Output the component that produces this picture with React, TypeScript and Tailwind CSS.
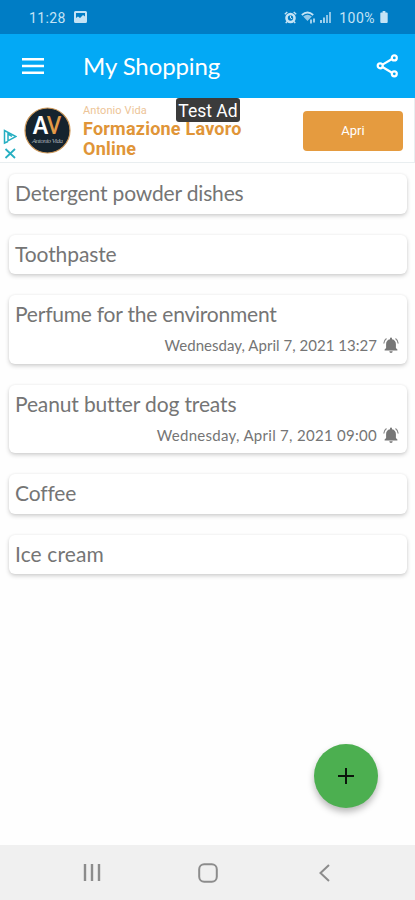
import React from 'react';

type Item = {
  title: string;
  titleClass: string;
  reminder?: string;
  reminderClass?: string;
};

const items: Item[] = [
  { title: 'Detergent powder dishes', titleClass: 'tracking-[-0.16px]' },
  { title: 'Toothpaste', titleClass: 'tracking-[-0.1px]' },
  { title: 'Perfume for the environment', titleClass: 'tracking-[-0.22px]', reminder: 'Wednesday, April 7, 2021 13:27', reminderClass: 'tracking-[0.03px]' },
  { title: 'Peanut butter dog treats', titleClass: 'tracking-[-0.14px]', reminder: 'Wednesday, April 7, 2021 09:00', reminderClass: 'tracking-[0.29px]' },
  { title: 'Coffee', titleClass: 'tracking-[-0.15px]' },
  { title: 'Ice cream', titleClass: 'tracking-[0.1px]' },
];

const StatusBar: React.FC = () => (
  <div className="h-[34px] bg-[#007dc5] flex items-center pl-[29px] pr-[27px] text-[#c4e3f5] font-[Roboto,sans-serif] text-[14px] shrink-0">
    <span className="tracking-[0.4px] pt-[2px]">11:28</span>
    <svg className="ml-[8px]" width="13" height="12" viewBox="0 0 13 12">
      <path fillRule="evenodd" fill="currentColor" d="M1.5 0h10A1.5 1.5 0 0 1 13 1.5v9a1.5 1.5 0 0 1-1.5 1.5h-10A1.5 1.5 0 0 1 0 10.5v-9A1.5 1.5 0 0 1 1.5 0zM2 2v5l2-1.5L6 7l3-3 2 1.5V2z" />
    </svg>
    <div className="ml-auto flex items-center">
      {/* Alarm */}
      <svg width="13" height="13" viewBox="0 0 13 13" fill="none" stroke="currentColor">
        <circle cx="6.5" cy="7" r="4" strokeWidth="2.6" />
        <path d="M.8 3.2L3.3.9M12.2 3.2L9.7.9M3 10.5l-1.2 1.7M10 10.5l1.2 1.7" strokeWidth="1.4" />
        <path d="M6.5 4.8V7l1.7.8" strokeWidth="1" />
      </svg>
      {/* Wifi */}
      <svg className="ml-[4px]" width="16" height="13" viewBox="0 0 16 13" fill="none" stroke="currentColor">
        <path d="M.8 4Q6.5 -1 12.2 4" strokeWidth="1.8" />
        <path d="M2.2 5.4Q6.5 2.2 10.8 5.4L6.5 10z" fill="currentColor" stroke="none" opacity=".75" />
        <path d="M10 8.500v4M13 7.5v4" strokeWidth="1.6" />
      </svg>
      {/* Signal */}
      <svg className="ml-[3px]" width="12" height="12" viewBox="0 0 12 12" fill="currentColor">
        <rect x="0" y="9" width="2" height="3" opacity=".8" />
        <rect x="3" y="6.5" width="2" height="5.5" opacity=".8" />
        <rect x="6" y="4" width="2" height="8" opacity=".7" />
        <rect x="9" y="1" width="2" height="11" opacity=".7" />
      </svg>
      <span className="ml-[7px] pt-[2px] tracking-[0.5px]">100%</span>
      <svg className="ml-[5px]" width="8" height="12" viewBox="0 0 8 13" fill="currentColor">
        <path d="M2.5 0h3v1.5H7a1 1 0 0 1 1 1V12a1 1 0 0 1-1 1H1a1 1 0 0 1-1-1V2.5a1 1 0 0 1 1-1h1.5z" />
      </svg>
    </div>
  </div>
);

const Header: React.FC = () => (
  <header className="h-[64px] bg-[#03a9f5] flex items-center pl-[22px] pr-[16px] text-white shrink-0">
    <svg width="22" height="16" viewBox="0 0 22 16" fill="none" stroke="currentColor" strokeWidth="2.4">
      <path d="M0 1.3h22M0 8h22M0 14.7h22" />
    </svg>
    <h1 className="ml-[39px] font-[Lato,sans-serif] text-[24px] tracking-[-0.1px] leading-8">My Shopping</h1>
    <svg className="ml-auto" width="23" height="24" viewBox="0 0 23 24" fill="none" stroke="currentColor" strokeWidth="2.2">
      <path d="M6.5 10.6L16 5M6.5 13L16 18.7" />
      <circle cx="4.2" cy="11.8" r="2.5" />
      <circle cx="18.3" cy="3.9" r="2.5" />
      <circle cx="18.3" cy="19.8" r="2.5" />
    </svg>
  </header>
);

const AdBanner: React.FC = () => (
  <div className="h-[65px] relative flex bg-white border-b border-r border-[#e9eef0] pt-[7px] pl-[3px] pr-[11px] font-[Roboto,sans-serif] shrink-0">
    <svg className="mt-[24px] shrink-0" width="14" height="32" viewBox="0 0 14 32" fill="none" stroke="#27afc2" strokeWidth="1.5">
      <path d="M5 12.500L1.5 14V1.5L13 7.5L5 11.8V5L9 7.3" />
      <path d="M2.5 20l9.5 9M12 20l-9.5 9" strokeWidth="1.8" />
    </svg>
    {/* Advertiser logo */}
    <svg className="ml-[7px] mt-[2px] shrink-0" width="47" height="47" viewBox="0 0 47 47">
      <circle cx="23.5" cy="23.5" r="22.5" fill="#15232e" stroke="#ce9858" strokeWidth="1.2" />
      <text x="9" y="26.5" fontFamily="Lato, sans-serif" fontSize="24" fontWeight="900" fill="#fff" textLength="15" lengthAdjust="spacingAndGlyphs">A</text>
      <text x="23" y="26.5" fontFamily="Lato, sans-serif" fontSize="24" fontWeight="700" fill="#e39a47" textLength="14" lengthAdjust="spacingAndGlyphs">V</text>
      <text x="8" y="35.5" fontFamily="Liberation Serif, serif" fontStyle="italic" fontSize="7" fill="#a3adb3" textLength="31">Antonio Vida</text>
    </svg>
    <div className="ml-[12px] text-[#e09538] whitespace-nowrap">
      <div className="text-[11px] leading-[12px] text-[#edc497] tracking-[0.1px]">Antonio Vida</div>
      <div className="text-[18px] font-bold leading-[20px] mt-[2px] tracking-[0.22px]">Formazione Lavoro<br />Online</div>
    </div>
    <button className="ml-auto mt-[6px] w-[100px] h-[40px] rounded-[4px] bg-[#e59b3f] text-white text-[13px] shrink-0">Apri</button>
    <div className="absolute left-[176px] top-0 w-[64px] h-[24px] bg-[#3b3b3b] rounded-[3px] text-white text-[17.5px] leading-[26px] text-center whitespace-nowrap">Test Ad</div>
  </div>
);

const BellIcon: React.FC = () => (
  <svg className="ml-[6px]" width="16" height="17" viewBox="0 0 16 17" fill="#777">
    <path d="M7 1.5a1 1 0 0 1 2 0v.7c2.6.5 3.9 2.3 3.9 4.8v4l1.5 1.5v1H1.6v-1L3.1 11V7c0-2.5 1.3-4.3 3.9-4.8zM6.3 14.3h3.4a1.7 1.7 0 0 1-3.4 0z" />
    <path d="M3.5 1.5A6.5 6.5 0 0 0 .8 6.5M12.5 1.5a6.5 6.5 0 0 1 2.7 5" fill="none" stroke="#888" strokeWidth="1.2" />
  </svg>
);

const ItemCard: React.FC<{ item: Item }> = ({ item }) => (
  <div className={`bg-white rounded-[6px] pl-[6px] pr-[8px] shadow-[0_2px_4px_rgba(0,0,0,0.18),0_0_3px_rgba(0,0,0,0.05)] font-[Lato,sans-serif] text-[#757575] ${item.reminder ? 'h-[68.5px]' : 'h-[39.5px]'}`}>
    <div className={`text-[21px] leading-[37px] h-[39px] whitespace-nowrap ${item.titleClass}`}>{item.title}</div>
    {item.reminder && (
      <div className="flex items-center justify-end h-[23px] text-[15px]">
        <span className={item.reminderClass}>{item.reminder}</span>
        <BellIcon />
      </div>
    )}
  </div>
);

const App: React.FC = () => {
  return (
    <div className="w-[415px] h-[900px] flex flex-col bg-[#fefefe] relative overflow-hidden">
      <StatusBar />
      <Header />
      <AdBanner />

      <main className="flex-1 flex flex-col gap-[21px] pt-[11px] pl-[9px] pr-[8px]">
        {items.map((item) => (
          <ItemCard key={item.title} item={item} />
        ))}
      </main>

      {/* Add button */}
      <button className="absolute left-[314px] top-[744px] size-[64px] rounded-full bg-[#4caf50] flex items-center justify-center shadow-[0_4px_7px_rgba(0,0,0,0.28)]" aria-label="Add">
        <svg width="16" height="16" viewBox="0 0 16 16" stroke="#0b160b" strokeWidth="2">
          <path d="M8 0v16M0 8h16" />
        </svg>
      </button>

      {/* System navigation */}
      <nav className="h-[55px] bg-[#f0f0f0] flex items-center justify-between pl-[83px] pr-[85px] text-[#8c8c8c] shrink-0">
        <svg width="18" height="17" viewBox="0 0 18 17" fill="none" stroke="currentColor" strokeWidth="2.4">
          <path d="M2 0v17M9 0v17M16 0v17" />
        </svg>
        <svg className="-ml-[5px]" width="20" height="20" viewBox="0 0 20 20" fill="none" stroke="currentColor" strokeWidth="2">
          <rect x="1.2" y="1.2" width="17.6" height="17.6" rx="5" />
        </svg>
        <svg width="11" height="18" viewBox="0 0 11 18" fill="none" stroke="currentColor" strokeWidth="2">
          <path d="M10 1L1.5 9l8.5 8" />
        </svg>
      </nav>
    </div>
  );
};

export default App;
